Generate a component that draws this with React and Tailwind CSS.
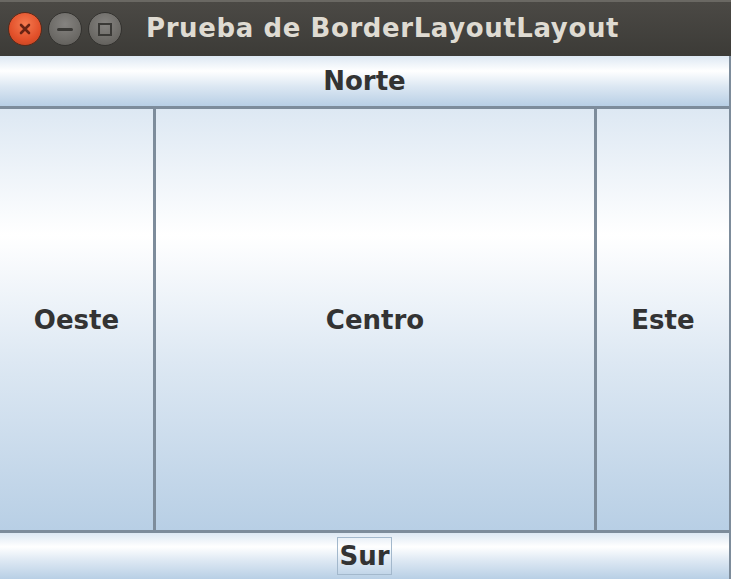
export default function App() {
  const grad =
    "bg-[linear-gradient(to_bottom,#dde8f3_0%,#ffffff_30%,#dde8f3_60%,#b8cfe5_100%)]";
  const txt =
    "font-['DejaVu_Sans',sans-serif] font-bold text-[26px] text-[#333333] leading-none";
  return (
    <div className="w-[737px] h-[584px] bg-white">
      <div className="w-[731px] h-[579px] flex flex-col">
        {/* title bar */}
        <div className="h-[56px] shrink-0 flex items-center border-t-[2px] border-t-[#6a6863] bg-[linear-gradient(to_bottom,#4b4945,#3c3b37)]">
          <div className="ml-[8px] flex items-center gap-[6px]">
            <div className="w-[34px] h-[34px] rounded-full bg-[radial-gradient(circle_at_50%_35%,#f57a4f,#e2502a_60%,#b8401f)] border border-[#5a2a1a] flex items-center justify-center">
              <svg width="12" height="12" viewBox="0 0 12 12">
                <path d="M2 2 L10 10 M10 2 L2 10" stroke="#6a2414" strokeWidth="2.6" strokeLinecap="round" />
              </svg>
            </div>
            <div className="w-[34px] h-[34px] rounded-full bg-[radial-gradient(circle_at_50%_35%,#858380,#6d6b67_60%,#5a5854)] border border-[#33322f] flex items-center justify-center">
              <div className="w-[16px] h-[3px] bg-[#3a3936] rounded-sm" />
            </div>
            <div className="w-[34px] h-[34px] rounded-full bg-[radial-gradient(circle_at_50%_35%,#858380,#6d6b67_60%,#5a5854)] border border-[#33322f] flex items-center justify-center">
              <div className="w-[14px] h-[13px] border-[2.5px] border-[#3a3936]" />
            </div>
          </div>
          <div className="ml-[24px] font-['DejaVu_Sans',sans-serif] font-bold text-[26px] tracking-[0.6px] text-[#dfdbd2] leading-none pb-[2px]">
            Prueba de BorderLayoutLayout
          </div>
        </div>
        {/* body */}
        <div className="flex-1 flex flex-col border-r-[2px] border-r-[#7d8c9b]">
          <div className={`h-[53px] shrink-0 ${grad} border-b-[3px] border-b-[#7d8c9b] flex items-center justify-center`}>
            <span className={txt}>Norte</span>
          </div>
          <div className="flex-1 flex border-b-[3px] border-b-[#7d8c9b]">
            <div className={`w-[156px] shrink-0 ${grad} border-r-[3px] border-r-[#7d8c9b] flex items-center justify-center`}>
              <span className={txt}>Oeste</span>
            </div>
            <div className={`flex-1 ${grad} border-r-[3px] border-r-[#7d8c9b] flex items-center justify-center`}>
              <span className={txt}>Centro</span>
            </div>
            <div className={`w-[132px] shrink-0 ${grad} flex items-center justify-center`}>
              <span className={txt}>Este</span>
            </div>
          </div>
          <div className={`h-[46px] shrink-0 ${grad} flex items-center justify-center`}>
            <span className={`${txt} border border-[#a3b8cc] px-[1px] py-[5px]`}>Sur</span>
          </div>
        </div>
      </div>
    </div>
  );
}
